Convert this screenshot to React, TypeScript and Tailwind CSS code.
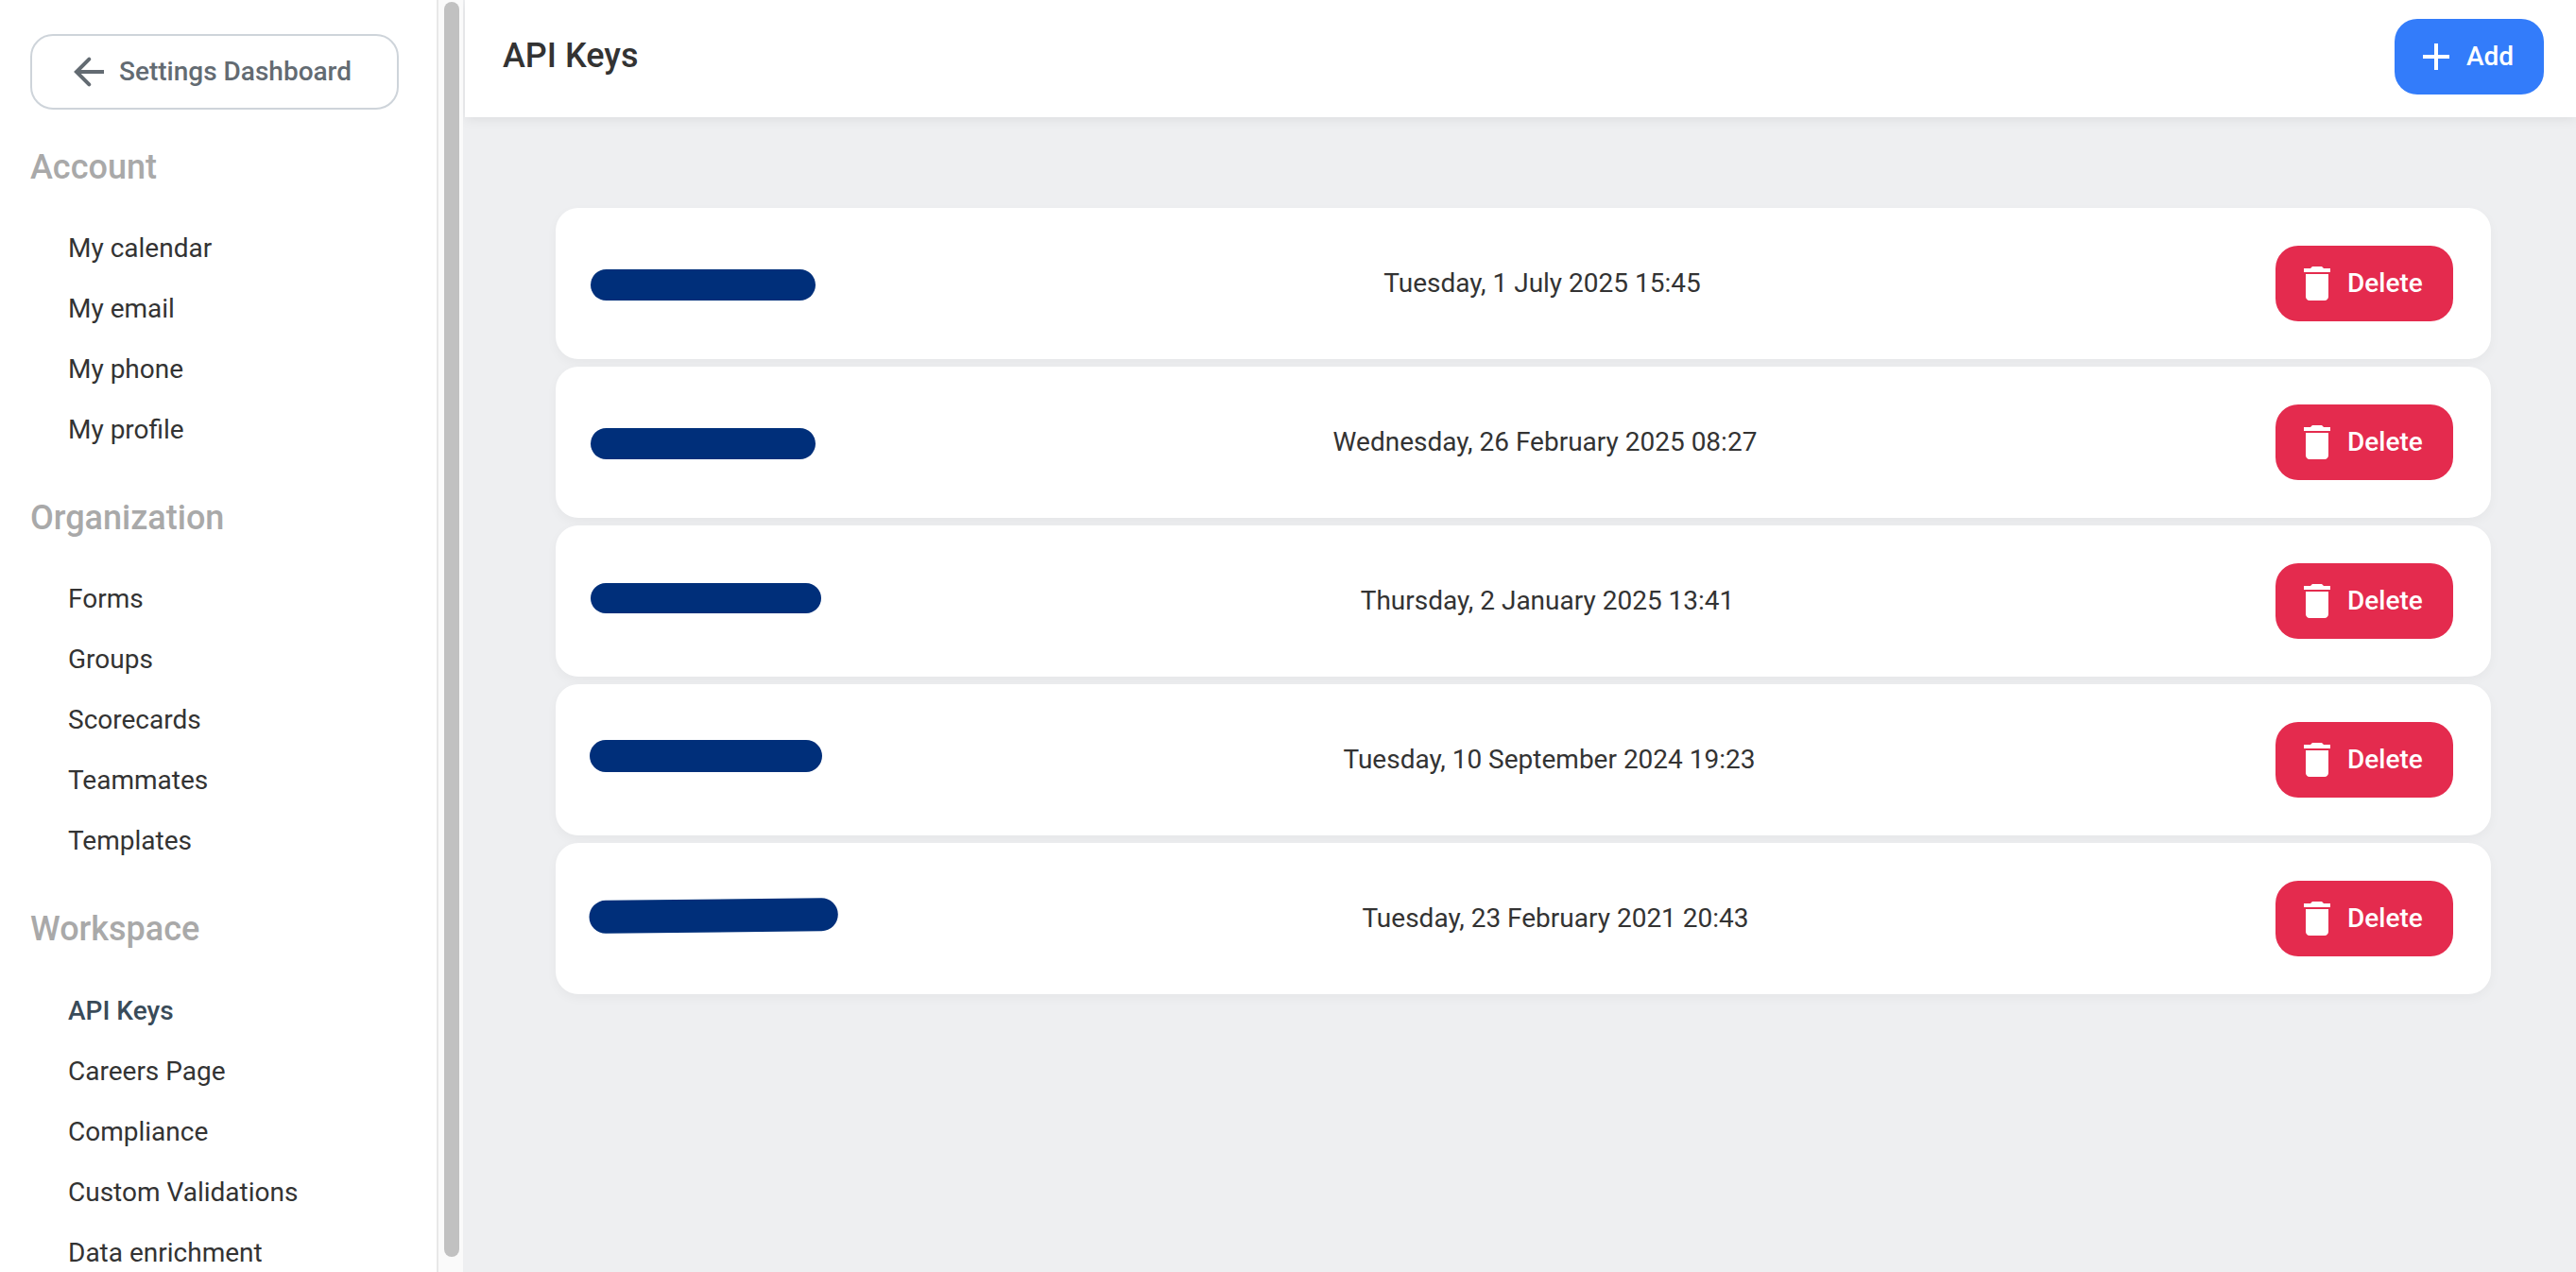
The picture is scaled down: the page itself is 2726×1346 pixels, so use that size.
import React from 'react';
import { MdAdd, MdDelete } from 'react-icons/md';

const sections = [
  {
    title: 'Account',
    items: ['My calendar', 'My email', 'My phone', 'My profile'],
  },
  {
    title: 'Organization',
    items: ['Forms', 'Groups', 'Scorecards', 'Teammates', 'Templates'],
  },
  {
    title: 'Workspace',
    items: ['API Keys', 'Careers Page', 'Compliance', 'Custom Validations', 'Data enrichment'],
  },
];

// every key is hidden behind a thick marker line, drawn from (x1, y1) to (x2, y2)
const apiKeys = [
  { date: 'Tuesday, 1 July 2025 15:45', width: 'w-[228px]', line: { x1: 13.5, y1: 81.5, x2: 218.5, y2: 81.5, size: 33 } },
  { date: 'Wednesday, 26 February 2025 08:27', width: 'w-[234px]', line: { x1: 13.5, y1: 81.5, x2: 218.5, y2: 81.5, size: 33 } },
  { date: 'Thursday, 2 January 2025 13:41', width: 'w-[239px]', line: { x1: 13, y1: 77, x2: 225, y2: 77, size: 32 } },
  { date: 'Tuesday, 10 September 2024 19:23', width: 'w-[243px]', line: { x1: 13, y1: 76, x2: 225, y2: 76, size: 34 } },
  { date: 'Tuesday, 23 February 2021 20:43', width: 'w-[256px]', line: { x1: 13, y1: 78.3, x2: 241.3, y2: 75.7, size: 35 } },
];

function Sidebar() {
  return (
    <aside className="flex w-[490px] shrink-0 bg-white">
      <div className="h-full w-[462px] overflow-hidden px-8 pt-9">
        <button className="mb-[39px] flex h-20 w-[390px] items-center rounded-3xl border-2 border-[#ced4da] pl-[42px] text-[28px] font-medium text-[#636b72]">
          <svg width="36" height="36" viewBox="0 0 36 36" fill="none" stroke="currentColor" strokeWidth="4">
            <path d="M34 18H5" />
            <path d="M18.3 4.6L4.9 18l13.4 13.4" strokeLinecap="round" />
          </svg>
          <span className="ml-3.5">Settings Dashboard</span>
        </button>
        {sections.map((section) => (
          <div key={section.title} className="mb-[39px]">
            <h2 className="mb-[32.2px] text-4xl leading-[44px] font-medium text-[#a9a9a9]">{section.title}</h2>
            <ul className="pl-10">
              {section.items.map((item) => (
                <li
                  key={item}
                  className={
                    item === 'API Keys'
                      ? 'h-16 text-[28px] leading-[64px] font-medium text-[#394b59]'
                      : 'h-16 text-[28px] leading-[64px] text-[#333]'
                  }
                >
                  {item}
                </li>
              ))}
            </ul>
          </div>
        ))}
      </div>
      <div className="w-7 border-l-2 border-[#e8e8e8] bg-[#fafafa] px-1.5 pt-0.5">
        <div className="h-[1328px] w-4 rounded-full bg-[#c1c1c1]" />
      </div>
    </aside>
  );
}

function App() {
  return (
    <div className="flex h-[1346px] w-[2726px] overflow-hidden bg-[#eeeff1] font-['Roboto',sans-serif] text-[28px] text-[#333]">
      <Sidebar />
      <main className="flex-1 overflow-hidden pl-0.5">
        <header className="flex h-[124px] justify-between bg-white pt-5 pr-[34px] pl-10 shadow-[0_2px_12px_rgba(0,0,0,0.08)]">
          <h1 className="text-4xl leading-[78px] font-medium">API Keys</h1>
          <button className="flex h-20 w-[158px] items-center gap-2 rounded-3xl bg-[#337cfa] pl-5 font-medium text-white">
            <MdAdd size={48} />
            Add
          </button>
        </header>
        <div className="flex flex-col gap-2 pt-24 pr-[90px] pl-24">
          {apiKeys.map(({ date, width, line }) => (
            <div
              key={date}
              className="flex h-40 items-center justify-between rounded-3xl bg-white px-10 shadow-[0_4px_12px_rgba(0,0,0,0.04)]"
            >
              <div className={width}>
                <svg className="overflow-visible" width="228" height="160">
                  <line
                    x1={line.x1}
                    y1={line.y1}
                    x2={line.x2}
                    y2={line.y2}
                    stroke="#002f7a"
                    strokeWidth={line.size}
                    strokeLinecap="round"
                  />
                </svg>
              </div>
              <span>{date}</span>
              <button className="flex h-20 w-[188px] items-center gap-2 rounded-3xl bg-[#e42b4e] pl-5 font-medium text-white">
                <MdDelete size={48} />
                Delete
              </button>
            </div>
          ))}
        </div>
      </main>
    </div>
  );
}

export default App;
